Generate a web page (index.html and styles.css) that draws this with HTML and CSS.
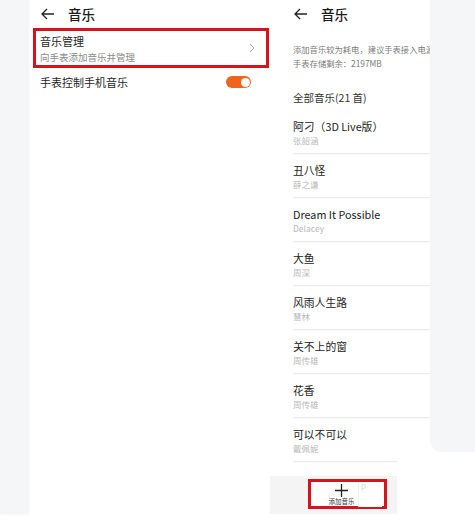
FILE: index.html
```html
<!DOCTYPE html>
<html lang="zh">
<head>
<meta charset="utf-8">
<link rel="stylesheet" href="styles.css">
</head>
<body>
<div class="page">
  <div class="strip-left"></div>
  <section class="screen-left">
    <header class="head">
      <svg class="back" width="13" height="12" viewBox="0 0 13 12"><path d="M6 1 L1 6 L6 11 M1 6 H13" fill="none" stroke="#222" stroke-width="1.3"/></svg>
      <span class="title">音乐</span>
    </header>
    <div class="manage">
      <div class="manage-text">
        <div class="manage-title">音乐管理</div>
        <div class="manage-sub">向手表添加音乐并管理</div>
      </div>
      <svg class="chev" width="6" height="10" viewBox="0 0 6 10"><path d="M1 1 L5 5 L1 9" fill="none" stroke="#aaa" stroke-width="1"/></svg>
    </div>
    <div class="toggle-row">
      <span class="toggle-label">手表控制手机音乐</span>
      <span class="toggle"><span class="knob"></span></span>
    </div>
  </section>
  <section class="screen-right">
    <header class="head head-r">
      <svg class="back" width="13" height="12" viewBox="0 0 13 12"><path d="M6 1 L1 6 L6 11 M1 6 H13" fill="none" stroke="#222" stroke-width="1.3"/></svg>
      <span class="title">音乐</span>
    </header>
    <div class="info">
      <div>添加音乐较为耗电，建议手表接入电源</div>
      <div>手表存储剩余：2197MB</div>
    </div>
    <div class="all">全部音乐(21 首)</div>
    <ul class="songs">
      <li><div class="song">阿刁（3D Live版）</div><div class="artist">张韶涵</div></li>
      <li><div class="song">丑八怪</div><div class="artist">薛之谦</div></li>
      <li><div class="song">Dream It Possible</div><div class="artist">Delacey</div></li>
      <li><div class="song">大鱼</div><div class="artist">周深</div></li>
      <li><div class="song">风雨人生路</div><div class="artist">慧林</div></li>
      <li><div class="song">关不上的窗</div><div class="artist">周传雄</div></li>
      <li><div class="song">花香</div><div class="artist">周传雄</div></li>
      <li class="last"><div class="song">可以不可以</div><div class="artist">戴佩妮</div></li>
    </ul>
    <div class="bottom-bar">
      <div class="add-box">
        <svg class="plus" width="13" height="13" viewBox="0 0 13 13"><path d="M6.5 0 V13 M0 6.5 H13" stroke="#222" stroke-width="1.3"/></svg>
        <span class="add-text">添加音乐</span>
        <span class="patch">P</span>
      </div>
    </div>
  </section>
  <div class="strip-right"></div>
</div>
</body>
</html>
```
FILE: styles.css
```css
* { box-sizing: border-box; margin: 0; padding: 0; }
html, body { background: #fff; }
body {
  width: 475px;
  height: 523px;
  overflow: hidden;
  font-family: "Noto Sans CJK SC", "Noto Sans", sans-serif;
  color: #222;
}
.page { display: flex; align-items: flex-start; }
.strip-left {
  width: 29px;
  height: 513px;
  background: #f5f6f8;
  box-shadow: 0 2px 3px rgba(0,0,0,0.04);
}
.screen-left {
  width: 241px;
  height: 513px;
  background: #fff;
  border-left: 1px solid #fafafa;
}
.head {
  height: 28px;
  display: flex;
  align-items: center;
  padding-left: 11px;
  gap: 14px;
}
.title { font-size: 13.5px; font-weight: 500; line-height: 16px; color: #1a1a1a; }
.manage {
  margin-left: 3px;
  width: 236px;
  height: 40px;
  border: 3px solid #d7141d;
  display: flex;
  align-items: center;
  padding-left: 4px;
  padding-right: 11px;
}
.manage-text { flex: 1; padding-top: 1px; }
.manage-title { font-size: 11px; line-height: 14px; color: #1e1e1e; }
.manage-sub { font-size: 9.5px; line-height: 12px; color: #8a8a8a; margin-top: 3px; }
.chev { margin-top: 0; }
.toggle-row {
  height: 28px;
  display: flex;
  align-items: center;
  justify-content: space-between;
  padding-left: 10px;
  padding-right: 19px;
}
.toggle-label { font-size: 11px; line-height: 14px; color: #1e1e1e; }
.toggle {
  width: 25px;
  height: 12px;
  border-radius: 6px;
  background: #f0641e;
  display: flex;
  justify-content: flex-end;
  align-items: center;
  padding-right: 1.5px;
}
.knob { width: 9px; height: 9px; border-radius: 50%; background: #fff; }

.screen-right {
  width: 160px;
  height: 523px;
  background: #fff;
}
.head-r { padding-left: 24px; gap: 14px; }
.info {
  margin-top: 14px;
  padding-left: 23px;
  font-size: 8.3px;
  line-height: 14px;
  color: #7a7a7a;
  white-space: nowrap;
  overflow: hidden;
}
.all {
  margin-top: 20px;
  padding-left: 23px;
  font-size: 10.5px;
  line-height: 16px;
  color: #333;
}
.songs { list-style: none; margin-top: 4px; }
.songs li {
  margin-left: 23px;
  padding-top: 8px;
  padding-bottom: 7px;
  border-bottom: 1px solid #ececec;
  box-shadow: 0 1px 1px rgba(0,0,0,0.02);
}
.songs li.last { margin-right: 33px; }
.song { font-size: 10.8px; line-height: 16px; color: #222; white-space: nowrap; }
.artist { font-size: 8.5px; line-height: 12px; color: #b8b8b8; margin-top: 0; white-space: nowrap; }
.bottom-bar {
  margin-top: 14px;
  width: 127px;
  height: 38px;
  background: #f4f4f5;
  padding-top: 3px;
  padding-left: 38px;
}
.add-box {
  position: relative;
  width: 79px;
  height: 30px;
  border: 3px solid #d7141d;
  background: #fff;
  display: flex;
  flex-direction: column;
  align-items: center;
  padding-right: 12px;
  padding-top: 2px;
}
.plus { display: block; }
.add-text { font-size: 6.5px; line-height: 9px; color: #333; }
.patch {
  position: absolute;
  left: 47px;
  top: 1px;
  width: 24px;
  height: 24px;
  background: #fff;
  border-left: 1px solid #eee;
  font-family: "DejaVu Sans", sans-serif;
  font-size: 8px;
  line-height: 8px;
  color: #ddd;
  padding-left: 2px;
  padding-top: 2px;
}
.strip-right {
  width: 45px;
  height: 452px;
  background: #f5f6f8;
  border-bottom-left-radius: 12px;
}
```
